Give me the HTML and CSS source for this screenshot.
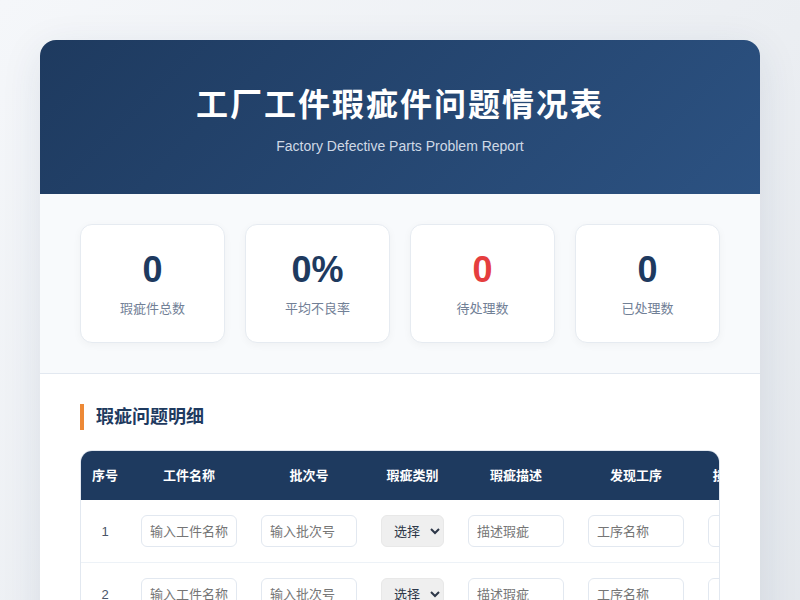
FILE: index.html
```html
<!DOCTYPE html>
<html lang="zh-CN">
  <head>
    <meta charset="UTF-8" />
    <meta name="viewport" content="width=device-width, initial-scale=1.0" />
    <title>工厂工件瑕疵件问题情况表</title>
    <link rel="stylesheet" href="styles.css">
  </head>
  <body>

    <div class="container">
      <header class="header">
        <h1>工厂工件瑕疵件问题情况表</h1>
        <p class="subtitle">Factory Defective Parts Problem Report</p>
      </header>

      <section class="stats">
        <div class="stat-card">
          <div class="stat-value">0</div>
          <div class="stat-label">瑕疵件总数</div>
        </div>
        <div class="stat-card">
          <div class="stat-value">0%</div>
          <div class="stat-label">平均不良率</div>
        </div>
        <div class="stat-card">
          <div class="stat-value danger">0</div>
          <div class="stat-label">待处理数</div>
        </div>
        <div class="stat-card">
          <div class="stat-value">0</div>
          <div class="stat-label">已处理数</div>
        </div>
      </section>

      <section class="detail">
        <h2 class="section-title">瑕疵问题明细</h2>
        <div class="table-wrap">
          <table>
            <thead>
              <tr>
                <th>序号</th>
                <th>工件名称</th>
                <th>批次号</th>
                <th>瑕疵类别</th>
                <th>瑕疵描述</th>
                <th>发现工序</th>
                <th>损失金额(万元)</th>
                <th>处理状态</th>
                <th>责任人</th>
              </tr>
            </thead>
            <tbody>
              <tr>
                <td class="num">1</td>
                <td><input type="text" placeholder="输入工件名称"></td>
                <td><input type="text" placeholder="输入批次号"></td>
                <td><select><option>选择</option><option>尺寸</option><option>外观</option><option>功能</option></select></td>
                <td><input type="text" placeholder="描述瑕疵"></td>
                <td><input type="text" placeholder="工序名称"></td>
                <td><input type="number"></td>
                <td><select><option>待处理</option><option>已处理</option></select></td>
                <td><input type="text" placeholder="姓名"></td>
              </tr>
              <tr>
                <td class="num">2</td>
                <td><input type="text" placeholder="输入工件名称"></td>
                <td><input type="text" placeholder="输入批次号"></td>
                <td><select><option>选择</option><option>尺寸</option><option>外观</option><option>功能</option></select></td>
                <td><input type="text" placeholder="描述瑕疵"></td>
                <td><input type="text" placeholder="工序名称"></td>
                <td><input type="number"></td>
                <td><select><option>待处理</option><option>已处理</option></select></td>
                <td><input type="text" placeholder="姓名"></td>
              </tr>
              <tr>
                <td class="num">3</td>
                <td><input type="text" placeholder="输入工件名称"></td>
                <td><input type="text" placeholder="输入批次号"></td>
                <td><select><option>选择</option><option>尺寸</option><option>外观</option><option>功能</option></select></td>
                <td><input type="text" placeholder="描述瑕疵"></td>
                <td><input type="text" placeholder="工序名称"></td>
                <td><input type="number"></td>
                <td><select><option>待处理</option><option>已处理</option></select></td>
                <td><input type="text" placeholder="姓名"></td>
              </tr>
            </tbody>
          </table>
        </div>
      </section>
    </div>

  </body>
</html>
```

FILE: styles.css
```css
* { box-sizing: border-box; font-family: "Liberation Sans", "Noto Sans CJK SC", sans-serif; }
body {
  margin: 0;
  padding: 40px;
  min-height: 100vh;
  background: linear-gradient(135deg, #f5f7fa 0%, #e2e6eb 100%);
  color: #2d3748;
}

.container {
  max-width: 720px;
  margin: 0 auto;
  background: white;
  border-radius: 16px;
  overflow: hidden;
  box-shadow: 0 10px 40px rgba(30, 58, 95, 0.1);
}

/* header */
.header {
  background: linear-gradient(135deg, #1e3a5f 0%, #2c5282 100%);
  color: white;
  text-align: center;
  padding: 45px 40px 38px;
}
.header h1 {
  margin: 0 0 11px;
  font-size: 32px;
  line-height: 40px;
  letter-spacing: 2px;
  font-weight: bold;
}
.subtitle {
  margin: 0;
  font-size: 14px;
  line-height: 20px;
  color: #cfd9e6;
}

/* summary cards */
.stats {
  display: grid;
  grid-template-columns: repeat(4, 1fr);
  gap: 20px;
  padding: 30px 40px;
  background: #f8fafc;
  border-bottom: 1px solid #e2e8f0;
}
.stat-card {
  background: white;
  border: 1px solid #e6ebf1;
  border-radius: 12px;
  padding: 23px 20px 23px;
  text-align: center;
  box-shadow: 0 2px 8px rgba(0, 0, 0, 0.04);
}
.stat-value {
  font-size: 36px;
  line-height: 43px;
  font-weight: bold;
  color: #1e3a5f;
  margin-bottom: 8px;
}
.stat-value.danger { color: #e53e3e; }
.stat-label {
  font-size: 13px;
  line-height: 20px;
  color: #718096;
}

/* detail table */
.detail { padding: 30px 40px; }
.section-title {
  margin: 0 0 20px;
  padding-left: 12px;
  border-left: 4px solid #ed8936;
  font-size: 18px;
  line-height: 26px;
  color: #1e3a5f;
}
.table-wrap {
  border: 1px solid #e2e8f0;
  border-radius: 12px;
  overflow-x: auto;
}
table {
  border-collapse: collapse;
  white-space: nowrap;
}
th {
  background: #1e3a5f;
  color: white;
  font-size: 13px;
  line-height: 20px;
  font-weight: bold;
  padding: 15px 12px 14px;
  text-align: center;
}
td {
  padding: 15px 12px;
  border-bottom: 1px solid #edf2f7;
  text-align: center;
  vertical-align: middle;
}
th:first-child,
td:first-child {
  padding-left: 11px;
  padding-right: 11px;
}
td.num {
  font-size: 13px;
  color: #4a5568;
}
td input {
  width: 96px;
  height: 32px;
  padding: 0 8px;
  border: 1px solid #e2e8f0;
  border-radius: 6px;
  font-size: 13px;
  color: #2d3748;
  background: white;
}
td select {
  min-width: 62px;
  height: 32px;
  padding: 0 6px 0 8px;
  border: 1px solid #e8e8e8;
  border-radius: 6px;
  font-size: 13px;
  color: #2d3748;
  background-color: #efefef;
}
```
